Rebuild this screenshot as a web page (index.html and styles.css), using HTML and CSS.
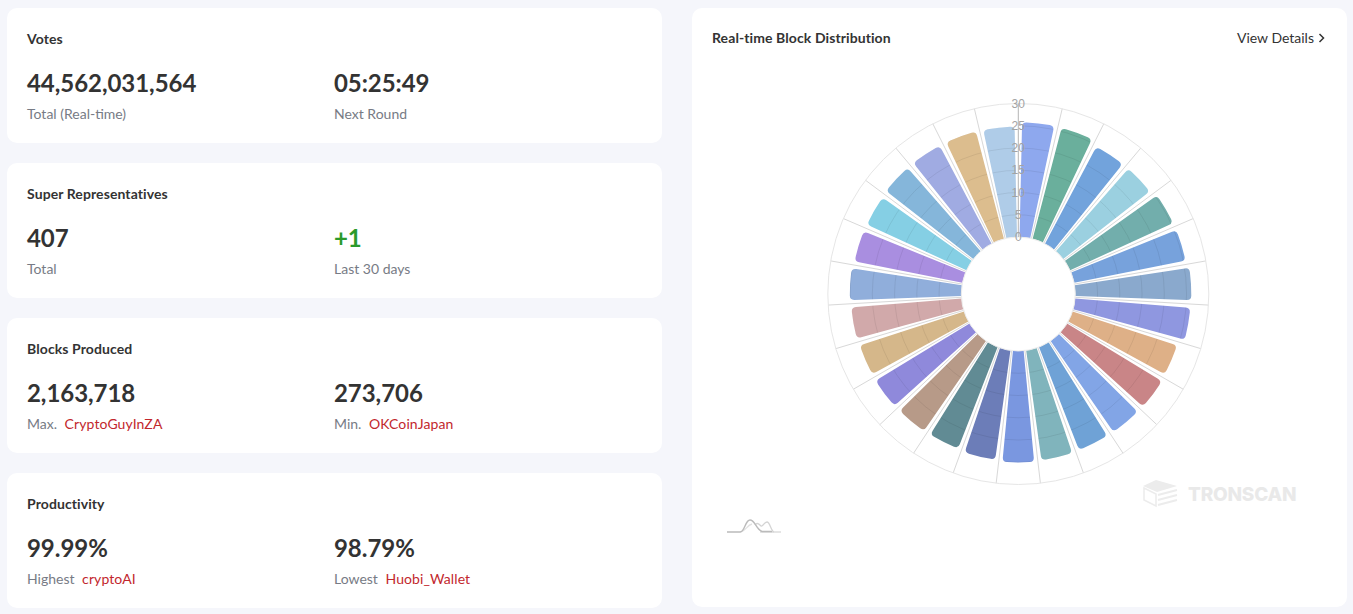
FILE: index.html
```html
<!DOCTYPE html>
<html lang="en">
<head>
<meta charset="utf-8">
<title>Super Representatives</title>
<link rel="stylesheet" href="styles.css">
</head>
<body>
<main class="layout">
  <section class="stats">
    <article class="card">
      <h3 class="card-title">Votes</h3>
      <div class="pair">
        <div><div class="value">44,562,031,564</div><div class="label">Total (Real-time)</div></div>
        <div><div class="value">05:25:49</div><div class="label">Next Round</div></div>
      </div>
    </article>
    <article class="card">
      <h3 class="card-title">Super Representatives</h3>
      <div class="pair">
        <div><div class="value">407</div><div class="label">Total</div></div>
        <div><div class="value value-up">+1</div><div class="label">Last 30 days</div></div>
      </div>
    </article>
    <article class="card">
      <h3 class="card-title">Blocks Produced</h3>
      <div class="pair">
        <div><div class="value">2,163,718</div><div class="label">Max. <a class="link">CryptoGuyInZA</a></div></div>
        <div><div class="value">273,706</div><div class="label">Min. <a class="link">OKCoinJapan</a></div></div>
      </div>
    </article>
    <article class="card">
      <h3 class="card-title">Productivity</h3>
      <div class="pair">
        <div><div class="value">99.99%</div><div class="label">Highest <a class="link">cryptoAI</a></div></div>
        <div><div class="value">98.79%</div><div class="label">Lowest <a class="link">Huobi_Wallet</a></div></div>
      </div>
    </article>
  </section>
  <section class="card chart-card">
    <header class="chart-head">
      <h3 class="card-title">Real-time Block Distribution</h3>
      <a class="details">View Details
        <svg class="chev" width="7" height="10" viewBox="0 0 7 10"><path d="M1.500 1l4 4-4 4" fill="none" stroke="#333" stroke-width="1.500"/></svg>
      </a>
    </header>
    <div class="chart-box">
      <svg id="polar" class="polar" width="655" height="599" viewBox="0 0 655 599"></svg>
      <div class="watermark">
        <svg width="35" height="28" viewBox="0 0 35 28">
          <path d="M0 6L13 0l21 6-20 6z" fill="#ececec"/>
          <path d="M1 8l12 6v12L1 20z" fill="none" stroke="#ececec" stroke-width="1.500"/>
          <path d="M15 15l19-5M15 20l19-5M15 25l19-5" fill="none" stroke="#ececec" stroke-width="2"/>
        </svg>
        <span>TRONSCAN</span>
      </div>
      <svg class="spark" width="56" height="18" viewBox="0 0 56 18">
        <path d="M34 15H55" fill="none" stroke="#ddd" stroke-width="1.500"/>
        <path d="M29 8c2-3 4-1 6 1 2 1 3-4 6-4 3 0 4 9 7 10" fill="none" stroke="#d4d4d4" stroke-width="1.300"/>
        <path d="M14 15c5 0 7-7 12-8" fill="none" stroke="#e2e2e2" stroke-width="1.300"/>
        <path d="M1 15H14C19 15 19 3 24 3 29 3 30 12 36 14.500H46" fill="none" stroke="#bbb" stroke-width="1.400"/>
      </svg>
    </div>
  </section>
</main>
<script src="chart.js"></script>
</body>
</html>
```
FILE: styles.css
```css
* { box-sizing: border-box; }
html, body { margin: 0; height: 100%; }
body {
  background: #f5f6fb;
  font-family: Lato, "Liberation Sans", sans-serif;
  color: #333;
  overflow: hidden;
}
.layout {
  display: grid;
  grid-template-columns: 655px 655px;
  column-gap: 30px;
  padding: 8px 6px 0 7px;
}
.stats { display: flex; flex-direction: column; gap: 20px; }
.card { background: #fff; border-radius: 10px; }
.stats .card { height: 135px; padding: 22px 20px 0; }
.card-title { margin: 0; font-size: 14px; line-height: 18px; font-weight: 700; color: #333; letter-spacing: .09px; }
.pair { display: grid; grid-template-columns: 307px 1fr; margin-top: 19px; }
.value { font-size: 24px; line-height: 32px; font-weight: 700; color: #333; letter-spacing: -.05px; }
.value-up { color: #2b9a2b; }
.label { margin-top: 5px; font-size: 14px; line-height: 20px; color: #777b85; }
.link { color: #c2272d; margin-left: 4px; letter-spacing: .1px; }
.chart-card { position: relative; height: 599px; }
.chart-head {
  display: flex;
  justify-content: space-between;
  align-items: center;
  padding: 21px 22px 0 20px;
}
.details { display: flex; align-items: center; gap: 4px; font-size: 14px; line-height: 18px; color: #333; }
.chev { display: block; }
.chart-box { position: absolute; inset: 0; pointer-events: none; }
.polar { position: absolute; left: 0; top: 0; }
.watermark {
  position: absolute;
  left: 451px;
  top: 472px;
  display: flex;
  align-items: center;
  gap: 10px;
  font-family: Inter, "Liberation Sans", sans-serif;
  font-weight: 800;
  font-size: 19px;
  letter-spacing: -.2px;
  color: #e9e9e9;
}
.spark { position: absolute; left: 34px; top: 509px; }
.polar-label { font: 12px "Liberation Sans", Arial, sans-serif; fill: #a3a3a3; text-anchor: middle; }
```
FILE: chart.js
```js
(function () {
  var cx = 326.3, cy = 286, r0 = 57, rMax = 190.5;
  var bars = [
    [171.8, '#8ea8ee'], [171.5, '#6aaf9c'], [166.5, '#72a3dc'], [166.6, '#9bd0e0'], [170.1, '#72aeac'],
    [170.4, '#77a2dc'], [173, '#8aa9cd'], [172.5, '#8f97e0'], [166.8, '#deb087'], [167.8, '#c98587'],
    [167.5, '#82a5e6'], [167.3, '#6fa2d6'], [167.8, '#80b4bc'], [168.5, '#7a97e0'], [167.1, '#6c7db8'],
    [165.8, '#618b94'], [166.3, '#b79a88'], [166.8, '#8f89db'], [166.5, '#d5b78a'], [167.4, '#d1a9aa'],
    [168.5, '#90aedb'], [166.8, '#a98ee0'], [166.4, '#85cfe4'], [167.6, '#85b6da'], [167.8, '#a0abe2'],
    [167.8, '#dcbd8e'], [167.5, '#afcce8']
  ];
  var step = 360 / bars.length, span = 10.8, corner = 4.5;
  function pt(r, deg) {
    var a = deg * Math.PI / 180;
    return (cx + r * Math.sin(a)).toFixed(2) + ' ' + (cy - r * Math.cos(a)).toFixed(2);
  }
  var out = '', shapes = '';
  for (var i = 1; i < bars.length; i++) {
    var ang = i * step;
    out += '<path d="M' + pt(r0, ang) + 'L' + pt(rMax, ang) + '" stroke="#d8d8d8" stroke-width="1"/>';
  }
  bars.forEach(function (b, n) {
    var mid = (n + 0.5) * step, a0 = mid - span / 2, a1 = mid + span / 2, r = b[0];
    var da = corner / r * 180 / Math.PI;
    var d = 'M' + pt(r0, a0) +
      'L' + pt(r - corner, a0) + 'Q' + pt(r, a0) + ' ' + pt(r, a0 + da) +
      'A' + r + ' ' + r + ' 0 0 1 ' + pt(r, a1 - da) +
      'Q' + pt(r, a1) + ' ' + pt(r - corner, a1) +
      'L' + pt(r0, a1) + 'A' + r0 + ' ' + r0 + ' 0 0 0 ' + pt(r0, a0) + 'Z';
    shapes += '<path d="' + d + '"/>';
    out += '<path fill="' + b[1] + '" d="' + d + '"/>';
  });
  out = '<clipPath id="bar-clip">' + shapes + '</clipPath>' + out;
  out += '<g clip-path="url(#bar-clip)">';
  for (var k = 1; k <= 5; k++) {
    out += '<circle cx="' + cx + '" cy="' + cy + '" r="' + (r0 + k * (rMax - r0) / 6) + '" fill="none" stroke="rgba(0,0,0,.07)"/>';
  }
  out += '</g>';
  out += '<circle cx="' + cx + '" cy="' + cy + '" r="' + rMax + '" fill="none" stroke="#e6e6e6"/>';
  out += '<circle cx="' + cx + '" cy="' + cy + '" r="' + r0 + '" fill="none" stroke="#ececec"/>';
  out += '<path d="M' + cx + ' ' + (cy - rMax) + 'V' + (cy - r0) + '" stroke="#b4b4b4" stroke-width="1"/>';
  for (var t = 0; t <= 6; t++) {
    out += '<text class="polar-label" x="' + cx + '" y="' + (cy - r0 - t * (rMax - r0) / 6 + 4) + '">' + (t * 5) + '</text>';
  }
  document.getElementById('polar').innerHTML = out;
})();
```
